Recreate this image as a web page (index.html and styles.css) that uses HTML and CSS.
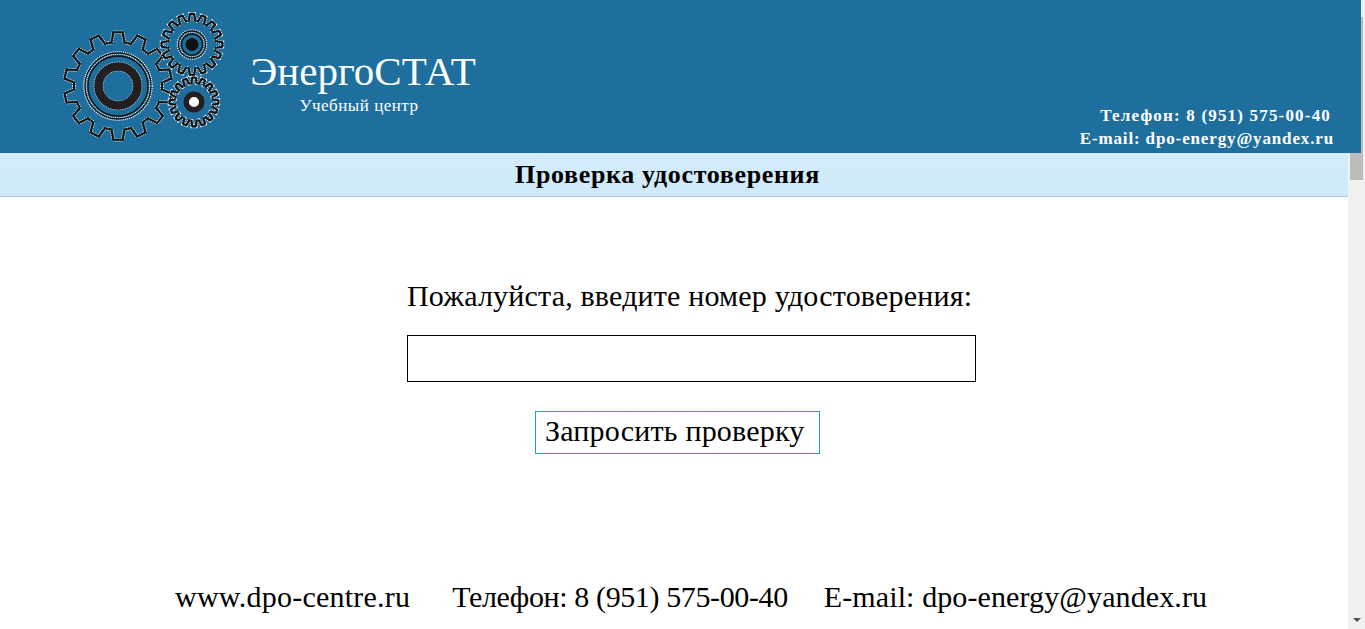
FILE: index.html
```html
<!DOCTYPE html>
<html lang="ru">
<head>
  <meta charset="UTF-8">
  <meta name="viewport" content="width=device-width, initial-scale=1.0">
  <title>Проверка удостоверения</title>
  <link rel="stylesheet" href="styles.css">
</head>
<body>
  <header class="site-header">
    <svg class="logo" width="170" height="135" viewBox="60 10 170 135" aria-hidden="true">
      <defs>
        <path id="tooth-big" d="M-9.79-42.9L-6.5-43.5L-4.6-53.8L4.6-53.8L6.5-43.5L9.79-42.9"/>
        <path id="tooth-top" d="M-4.68-23.54L-3.2-23.8L-2.2-30.4L2.2-30.4L3.2-23.8L4.68-23.54"/>
        <path id="tooth-low" d="M-3.7-18.63L-2.5-18.8L-1.8-24.4L1.8-24.4L2.5-18.8L3.7-18.63"/>
        <g id="teeth-big">
          <use href="#tooth-big"/>
          <use href="#tooth-big" transform="rotate(25.71)"/>
          <use href="#tooth-big" transform="rotate(51.43)"/>
          <use href="#tooth-big" transform="rotate(77.14)"/>
          <use href="#tooth-big" transform="rotate(102.86)"/>
          <use href="#tooth-big" transform="rotate(128.57)"/>
          <use href="#tooth-big" transform="rotate(154.29)"/>
          <use href="#tooth-big" transform="rotate(180)"/>
          <use href="#tooth-big" transform="rotate(205.71)"/>
          <use href="#tooth-big" transform="rotate(231.43)"/>
          <use href="#tooth-big" transform="rotate(257.14)"/>
          <use href="#tooth-big" transform="rotate(282.86)"/>
          <use href="#tooth-big" transform="rotate(308.57)"/>
          <use href="#tooth-big" transform="rotate(334.29)"/>
        </g>
        <g id="teeth-top">
          <use href="#tooth-top"/>
          <use href="#tooth-top" transform="rotate(22.5)"/>
          <use href="#tooth-top" transform="rotate(45)"/>
          <use href="#tooth-top" transform="rotate(67.5)"/>
          <use href="#tooth-top" transform="rotate(90)"/>
          <use href="#tooth-top" transform="rotate(112.5)"/>
          <use href="#tooth-top" transform="rotate(135)"/>
          <use href="#tooth-top" transform="rotate(157.5)"/>
          <use href="#tooth-top" transform="rotate(180)"/>
          <use href="#tooth-top" transform="rotate(202.5)"/>
          <use href="#tooth-top" transform="rotate(225)"/>
          <use href="#tooth-top" transform="rotate(247.5)"/>
          <use href="#tooth-top" transform="rotate(270)"/>
          <use href="#tooth-top" transform="rotate(292.5)"/>
          <use href="#tooth-top" transform="rotate(315)"/>
          <use href="#tooth-top" transform="rotate(337.5)"/>
        </g>
        <g id="teeth-low">
          <use href="#tooth-low"/>
          <use href="#tooth-low" transform="rotate(22.5)"/>
          <use href="#tooth-low" transform="rotate(45)"/>
          <use href="#tooth-low" transform="rotate(67.5)"/>
          <use href="#tooth-low" transform="rotate(90)"/>
          <use href="#tooth-low" transform="rotate(112.5)"/>
          <use href="#tooth-low" transform="rotate(135)"/>
          <use href="#tooth-low" transform="rotate(157.5)"/>
          <use href="#tooth-low" transform="rotate(180)"/>
          <use href="#tooth-low" transform="rotate(202.5)"/>
          <use href="#tooth-low" transform="rotate(225)"/>
          <use href="#tooth-low" transform="rotate(247.5)"/>
          <use href="#tooth-low" transform="rotate(270)"/>
          <use href="#tooth-low" transform="rotate(292.5)"/>
          <use href="#tooth-low" transform="rotate(315)"/>
          <use href="#tooth-low" transform="rotate(337.5)"/>
        </g>
      </defs>
      <g transform="translate(118 86)">
        <use href="#teeth-big" class="gear-halo"/>
        <use href="#teeth-big" class="gear-line"/>
        <circle r="33" class="gear-halo"/>
        <circle r="30" class="gear-thin"/>
        <circle r="33" class="gear-thin"/>
        <circle r="19.5" class="gear-ring-halo"/>
        <circle r="19.5" class="gear-ring"/>
      </g>
      <g transform="translate(192 44.5)">
        <use href="#teeth-top" class="gear-halo"/>
        <use href="#teeth-top" class="gear-line"/>
        <circle r="13.5" class="gear-halo"/>
        <circle r="13.5" class="gear-thin"/>
        <circle r="10.5" class="gear-thin"/>
        <circle r="6.5" class="gear-core"/>
      </g>
      <g transform="translate(194 102)">
        <use href="#teeth-low" class="gear-halo"/>
        <use href="#teeth-low" class="gear-line"/>
        <circle r="7.8" class="gear-small-ring"/>
      </g>
    </svg>
    <div class="brand">
      <div class="brand-name">ЭнергоСТАТ</div>
      <div class="brand-sub">Учебный центр</div>
    </div>
    <div class="contacts">
      <div class="contacts-phone">Телефон: 8 (951) 575-00-40</div>
      <div class="contacts-mail">E-mail: dpo-energy@yandex.ru</div>
    </div>
  </header>

  <div class="subheader">Проверка удостоверения</div>

  <main class="check-form">
    <label class="check-label" for="number">Пожалуйста, введите номер удостоверения:</label>
    <input class="check-input" type="text" id="number">
    <button class="check-button" type="button">Запросить проверку</button>
  </main>

  <footer class="site-footer">
    <span class="footer-site">www.dpo-centre.ru</span>
    <span class="footer-phone">Телефон: 8 (951) 575-00-40</span>
    <span class="footer-mail">E-mail: dpo-energy@yandex.ru</span>
  </footer>

  <div class="scrollbar">
    <div class="scrollbar-thumb"></div>
    <div class="scrollbar-arrow"></div>
  </div>
</body>
</html>
```

FILE: styles.css
```css
* {
  box-sizing: border-box;
}

html, body {
  height: 629px;
  overflow: hidden;
}

body {
  margin: 0;
  position: relative;
  font-family: "Liberation Serif", "Noto Sans CJK SC", serif;
  color: #000;
  background: #fff;
}

.site-header {
  position: relative;
  z-index: 2;
  display: flex;
  width: 1361px;
  height: 153px;
  background: #1f6f9e;
  color: #fff;
}

.logo {
  flex: none;
  margin: 10px 0 0 60px;
}

.gear-halo {
  fill: none;
  stroke: #fff;
  stroke-width: 3.6;
  stroke-dasharray: 1 1;
}

.gear-line {
  fill: none;
  stroke: #111;
  stroke-width: 2.1;
  stroke-linejoin: round;
}

.gear-thin {
  fill: none;
  stroke: #111;
  stroke-width: 1.3;
}

.gear-ring-halo {
  fill: none;
  stroke: #fff;
  stroke-width: 9.5;
  stroke-dasharray: 1 1;
}

.gear-ring {
  fill: none;
  stroke: #231f20;
  stroke-width: 8.5;
}

.gear-core {
  fill: #111;
}

.gear-small-ring {
  fill: #fff;
  stroke: #231f20;
  stroke-width: 5.5;
}

.brand {
  flex: none;
  width: 226px;
  margin: 48px 0 0 20px;
  text-align: center;
}

.brand-name {
  font-size: 41px;
  line-height: 46px;
  white-space: nowrap;
}

.brand-sub {
  margin-top: 2px;
  padding-right: 8px;
  font-size: 17px;
  line-height: 20px;
  letter-spacing: 0.5px;
}

.contacts {
  margin-left: auto;
  margin-right: 27px;
  padding-bottom: 3px;
  align-self: flex-end;
  text-align: right;
  font-size: 17px;
  font-weight: bold;
  line-height: 23px;
}

.contacts-phone {
  padding-right: 3px;
  letter-spacing: 1.18px;
}

.contacts-mail {
  letter-spacing: 0.86px;
}

.subheader {
  width: 1348px;
  height: 44px;
  padding: 7px 13px 0 0;
  border-bottom: 1px solid #a9c8dc;
  background: linear-gradient(#d4ecfa, #cfe9fa);
  font-size: 26px;
  font-weight: bold;
  line-height: 30px;
  text-align: center;
  letter-spacing: 0.65px;
}

.check-form {
  display: flex;
  flex-direction: column;
  align-items: flex-start;
  margin-left: 407px;
  padding-top: 81px;
}

.check-label {
  font-size: 30px;
  line-height: 36px;
  letter-spacing: 0.18px;
}

.check-input {
  display: block;
  width: 569px;
  height: 47px;
  margin-top: 21px;
  border: 1px solid #000;
  background: #fff;
  border-radius: 0;
}

.check-button {
  width: 285px;
  height: 43px;
  margin: 29px 0 0 128px;
  padding: 0 0 3px 9px;
  border: 1px solid #1f9fb8;
  background: #fff;
  color: #000;
  font-family: inherit;
  font-size: 30px;
  line-height: 36px;
  letter-spacing: 0.2px;
  text-align: left;
}

.site-footer {
  position: absolute;
  left: 175px;
  top: 579px;
  display: flex;
  font-size: 30px;
  line-height: 36px;
  white-space: nowrap;
}

.footer-site {
  letter-spacing: 0.23px;
}

.footer-phone {
  margin-left: 42px;
  letter-spacing: -0.38px;
}

.footer-mail {
  margin-left: 36px;
  letter-spacing: 0.11px;
}

.scrollbar {
  position: absolute;
  z-index: 1;
  top: 0;
  right: 0;
  width: 17px;
  height: 629px;
  background: #f0f0f0;
}

.scrollbar-thumb {
  position: absolute;
  top: 17px;
  left: 2px;
  width: 13px;
  height: 163px;
  background: #bcbcbc;
}

.scrollbar-arrow {
  position: absolute;
  left: 5px;
  bottom: 7px;
  width: 0;
  height: 0;
  border-left: 4px solid transparent;
  border-right: 4px solid transparent;
  border-top: 4px solid #505050;
}
```
